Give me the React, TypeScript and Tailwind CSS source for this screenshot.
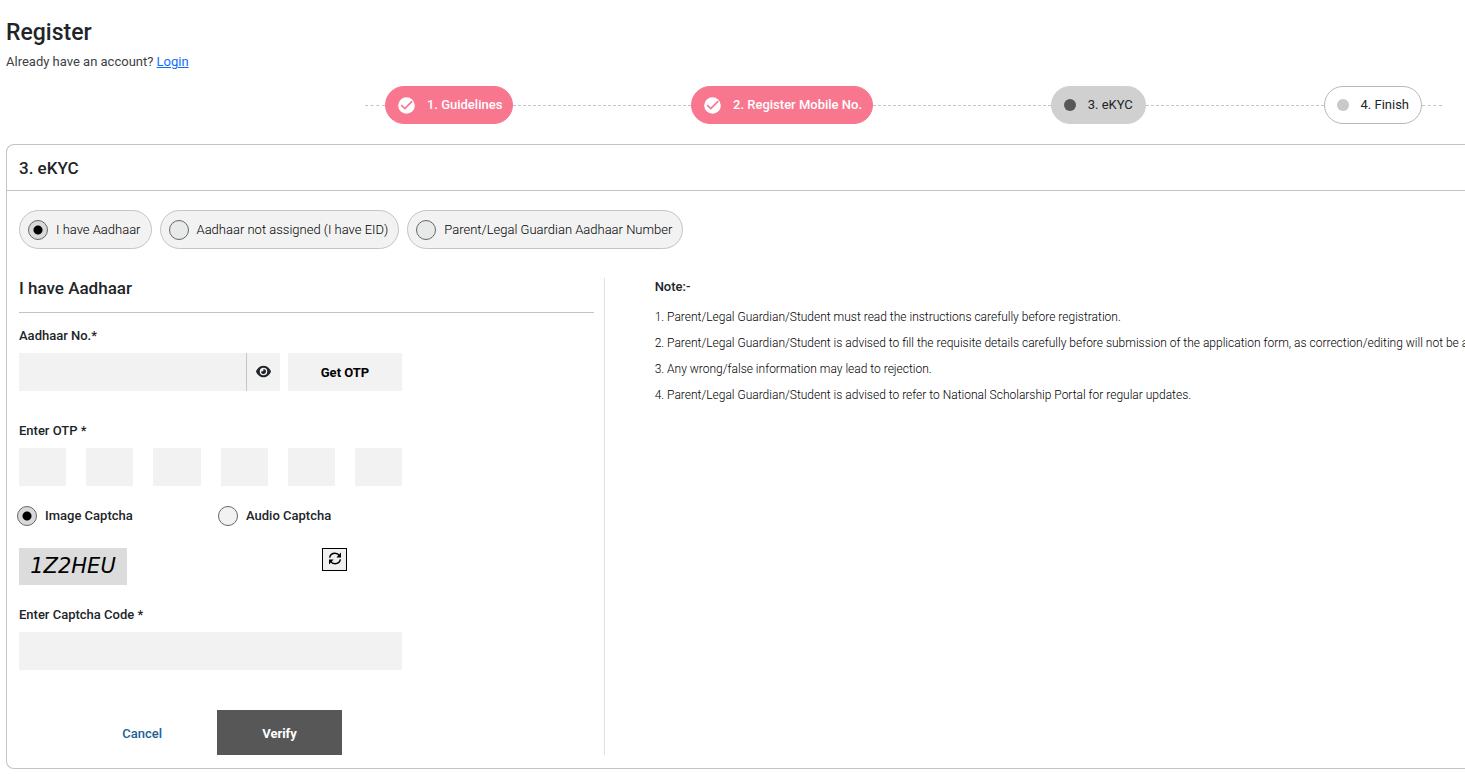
import { useState } from "react";
import { FaEye } from "react-icons/fa6";

const steps = [
  { label: "1. Guidelines", state: "done" },
  { label: "2. Register Mobile No.", state: "done" },
  { label: "3. eKYC", state: "current" },
  { label: "4. Finish", state: "todo" },
];

const idTypes = [
  ["aadhaar", "I have Aadhaar"],
  ["eid", "Aadhaar not assigned (I have EID)"],
  ["guardian", "Parent/Legal Guardian Aadhaar Number"],
];

const notes = [
  "1. Parent/Legal Guardian/Student must read the instructions carefully before registration.",
  "2. Parent/Legal Guardian/Student is advised to fill the requisite details carefully before submission of the application form, as correction/editing will not be al",
  "3. Any wrong/false information may lead to rejection.",
  "4. Parent/Legal Guardian/Student is advised to refer to National Scholarship Portal for regular updates.",
];

const stepStyles: Record<string, string> = {
  done: "bg-[#f8778f] border-[#f8778f] text-white font-medium pl-3 pr-[10px]",
  current: "bg-[#d0d0d0] border-[#d0d0d0] text-[#212529] px-3",
  todo: "bg-white border-[#b8b8b8] text-[#212529] px-3",
};

const radio =
  "appearance-none shrink-0 size-5 rounded-full border border-[#666] checked:bg-[radial-gradient(circle,#000_4px,#d9d9d9_5px)]";
const field = "h-[38px] bg-[#f2f2f2] px-3 text-sm outline-none";

function StepIcon({ state }: { state: string }) {
  if (state === "done") {
    return (
      <svg viewBox="0 0 17 17" className="size-[17px]">
        <circle cx="8.5" cy="8.5" r="8.3" fill="#fff" />
        <path d="M3.2 8.2l3.6 3.4 7.4-7.4" fill="none" stroke="#f8778f" strokeWidth="1.7" />
      </svg>
    );
  }
  return <span className={`size-3 rounded-full ${state === "current" ? "bg-[#575757]" : "bg-[#c9c9c9]"}`} />;
}

function RefreshIcon() {
  return (
    <svg viewBox="0 0 14 13" className="w-[14px] h-[13px]">
      <path d="M1.6 5.6C2.2 3 4.4 1.3 7 1.3c1.9 0 3.4.8 4.4 2.3M12.4 7.4c-.6 2.6-2.8 4.3-5.4 4.3-1.9 0-3.4-.8-4.4-2.3" fill="none" stroke="currentColor" strokeWidth="1.5" />
      <path d="M13 .6v4.8H8.4zM1 12.4V7.6h4.6z" fill="currentColor" />
    </svg>
  );
}

function Stepper() {
  return (
    <ol className="flex items-center ml-[24.6%] mr-[23px] mt-[14px]">
      {steps.map(({ label, state }, i) => (
        <li key={label} className={`flex items-center ${i > 0 ? "grow" : ""}`}>
          <span className={`border-t border-dashed border-[#c4c4c4] ${i > 0 ? "grow" : "w-5"}`} />
          <span className={`flex items-center gap-3 h-[38px] rounded-full border text-[13px] whitespace-nowrap ${stepStyles[state]}`}>
            <StepIcon state={state} />
            {label}
          </span>
          {i === steps.length - 1 && <span className="w-5 border-t border-dashed border-[#c4c4c4]" />}
        </li>
      ))}
    </ol>
  );
}

export default function App() {
  const [idType, setIdType] = useState("aadhaar");
  const [captcha, setCaptcha] = useState("image");

  return (
    <main className="pl-[6px] pt-[17px] pb-[10px] overflow-hidden text-[13px] leading-5 text-[#212529] font-[Roboto,sans-serif]">
      <h1 className="text-[23px] leading-8 font-medium">Register</h1>
      <p className="mt-[3px] text-[#3c4146]">
        Already have an account? <a href="#login" className="text-[#0d6efd] underline">Login</a>
      </p>
      <Stepper />

      <section className="mt-5 border border-r-0 border-[#c4c4c4] rounded-l-lg">
        <h2 className="h-[46px] flex items-center px-3 border-b border-[#c4c4c4] text-[17px] font-medium">3. eKYC</h2>
        <div className="pl-3 pt-[19px] pb-[13px]">
          <div className="flex gap-2">
            {idTypes.map(([value, label]) => (
              <label key={value} className="flex items-center gap-2 h-[39px] pl-2 pr-[10px] rounded-full border border-[#c4c4c4] bg-[#f2f2f2] text-black font-light whitespace-nowrap">
                <input type="radio" name="idType" value={value} className={`${radio} bg-[#e8e9e9]`}
                  checked={idType === value} onChange={() => setIdType(value)} />
                {label}
              </label>
            ))}
          </div>

          <div className="flex mt-[29px]">
            <form className="w-[40.5%] shrink-0 pr-[10px] border-r border-[#dee2e6]" onSubmit={e => e.preventDefault()}>
              <h3 className="h-[35px] leading-5 border-b border-[#c4c4c4] text-[17px] font-medium">I have Aadhaar</h3>

              <div className="max-w-[383px]">
                <label htmlFor="aadhaar" className="block mt-[13px] font-medium">Aadhaar No.*</label>
                <div className="flex mt-[7px]">
                  <input id="aadhaar" className={`${field} grow min-w-0 border-r border-[#c4c4c4]`} />
                  <button type="button" aria-label="Show Aadhaar number" className="w-[33px] h-[38px] pb-[2px] flex items-center justify-center bg-[#f2f2f2]">
                    <FaEye size={15} />
                  </button>
                  <button type="button" className="ml-2 w-[114px] h-[38px] pt-[2px] bg-[#f2f2f2] text-black font-bold">Get OTP</button>
                </div>

                <fieldset className="mt-[30px]">
                  <legend className="font-medium">Enter OTP *</legend>
                  <div className="grid grid-cols-6 gap-5 mt-[7px]">
                    {[1, 2, 3, 4, 5, 6].map(n => (
                      <input key={n} aria-label={`OTP digit ${n}`} maxLength={1} className={`${field} w-full min-w-0 text-center`} />
                    ))}
                  </div>
                </fieldset>

                <div className="flex mt-5 -ml-[2px] font-medium">
                  <label className="w-[201px] flex items-center gap-2">
                    <input type="radio" name="captcha" className={`${radio} bg-[#f2f2f2]`}
                      checked={captcha === "image"} onChange={() => setCaptcha("image")} />
                    Image Captcha
                  </label>
                  <label className="flex items-center gap-2">
                    <input type="radio" name="captcha" className={`${radio} bg-[#f2f2f2]`}
                      checked={captcha === "audio"} onChange={() => setCaptcha("audio")} />
                    Audio Captcha
                  </label>
                </div>

                <div className="flex justify-between items-start mt-[22px] pr-[55px]">
                  <span className="w-[108px] h-[37px] pb-[2px] flex items-center justify-center bg-[#dcdcdc] text-black text-[21px] italic font-['DejaVu_Sans',sans-serif]">1Z2HEU</span>
                  <button type="button" aria-label="Refresh captcha" className="w-[25px] h-[23px] pb-[2px] flex items-center justify-center border border-black bg-[#f0f0f0] text-black">
                    <RefreshIcon />
                  </button>
                </div>

                <label htmlFor="captcha" className="block mt-5 font-medium">Enter Captcha Code *</label>
                <input id="captcha" className={`${field} block w-full mt-[7px]`} />

                <div className="flex justify-end mt-10 pr-[60px] gap-[30px]">
                  <button type="button" className="px-[25px] pt-[2px] text-[#1b6297] font-medium">Cancel</button>
                  <button type="submit" className="w-[125px] h-[45px] pt-[2px] bg-[#575757] text-white font-bold">Verify</button>
                </div>
              </div>
            </form>

            <aside className="pl-[50px] grow min-w-0">
              <h4 className="font-medium leading-[18px]">Note:-</h4>
              <ul className="mt-2 text-xs leading-[26px] text-black font-light whitespace-nowrap">
                {notes.map(note => <li key={note}>{note}</li>)}
              </ul>
            </aside>
          </div>
        </div>
      </section>
    </main>
  );
}
